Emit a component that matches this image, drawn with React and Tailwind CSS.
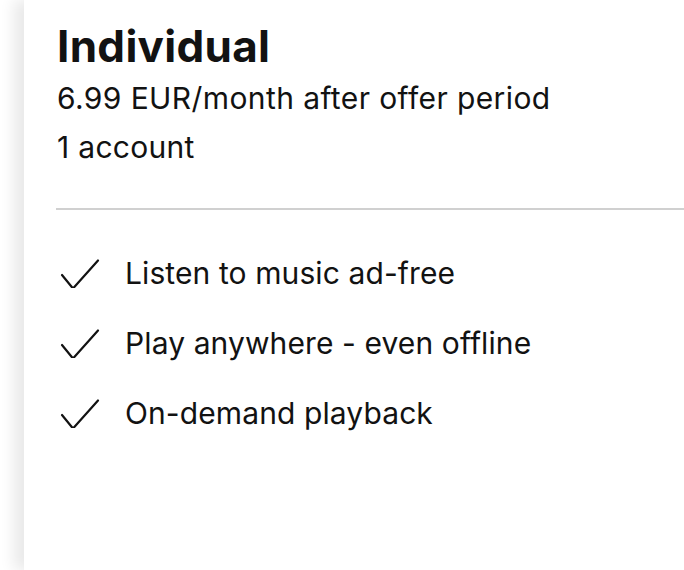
const features = [
  "Listen to music ad-free",
  "Play anywhere - even offline",
  "On-demand playback",
];

function Check() {
  return (
    <svg width="40" height="30" viewBox="0 -2 40 30" fill="none" className="shrink-0">
      <path d="M2 15 L13 28.5 L38 0.5" stroke="#121212" strokeWidth="2.2" strokeLinecap="round" strokeLinejoin="round" />
    </svg>
  );
}

export default function App() {
  return (
    <main className="h-[570px] w-[684px] overflow-hidden bg-white font-['Inter',sans-serif] text-[#121212]">
      <div className="ml-[24px] h-full bg-white pt-[18px] shadow-[-10px_0_14px_rgba(0,0,0,0.09)]">
        <div className="pl-[33px]">
          <h1 className="text-[44px] font-bold leading-[56px] tracking-[0.3px]">Individual</h1>
          <p className="text-[30px] leading-[48px] tracking-[0.4px]">6.99 EUR/month after offer period</p>
          <p className="text-[30px] leading-[50px] tracking-[0.3px]">1 account</p>
        </div>

        <hr className="ml-[32px] mt-[36px] border-t-2 border-[#d0d0d0]" />

        <ul className="mt-[43px] flex flex-col gap-[30px] pl-[36px]">
          {features.map((f) => (
            <li key={f} className="flex items-center gap-[25px]">
              <Check />
              <span className="text-[30px] leading-[40px] tracking-[0.1px]">{f}</span>
            </li>
          ))}
        </ul>
      </div>
    </main>
  );
}
